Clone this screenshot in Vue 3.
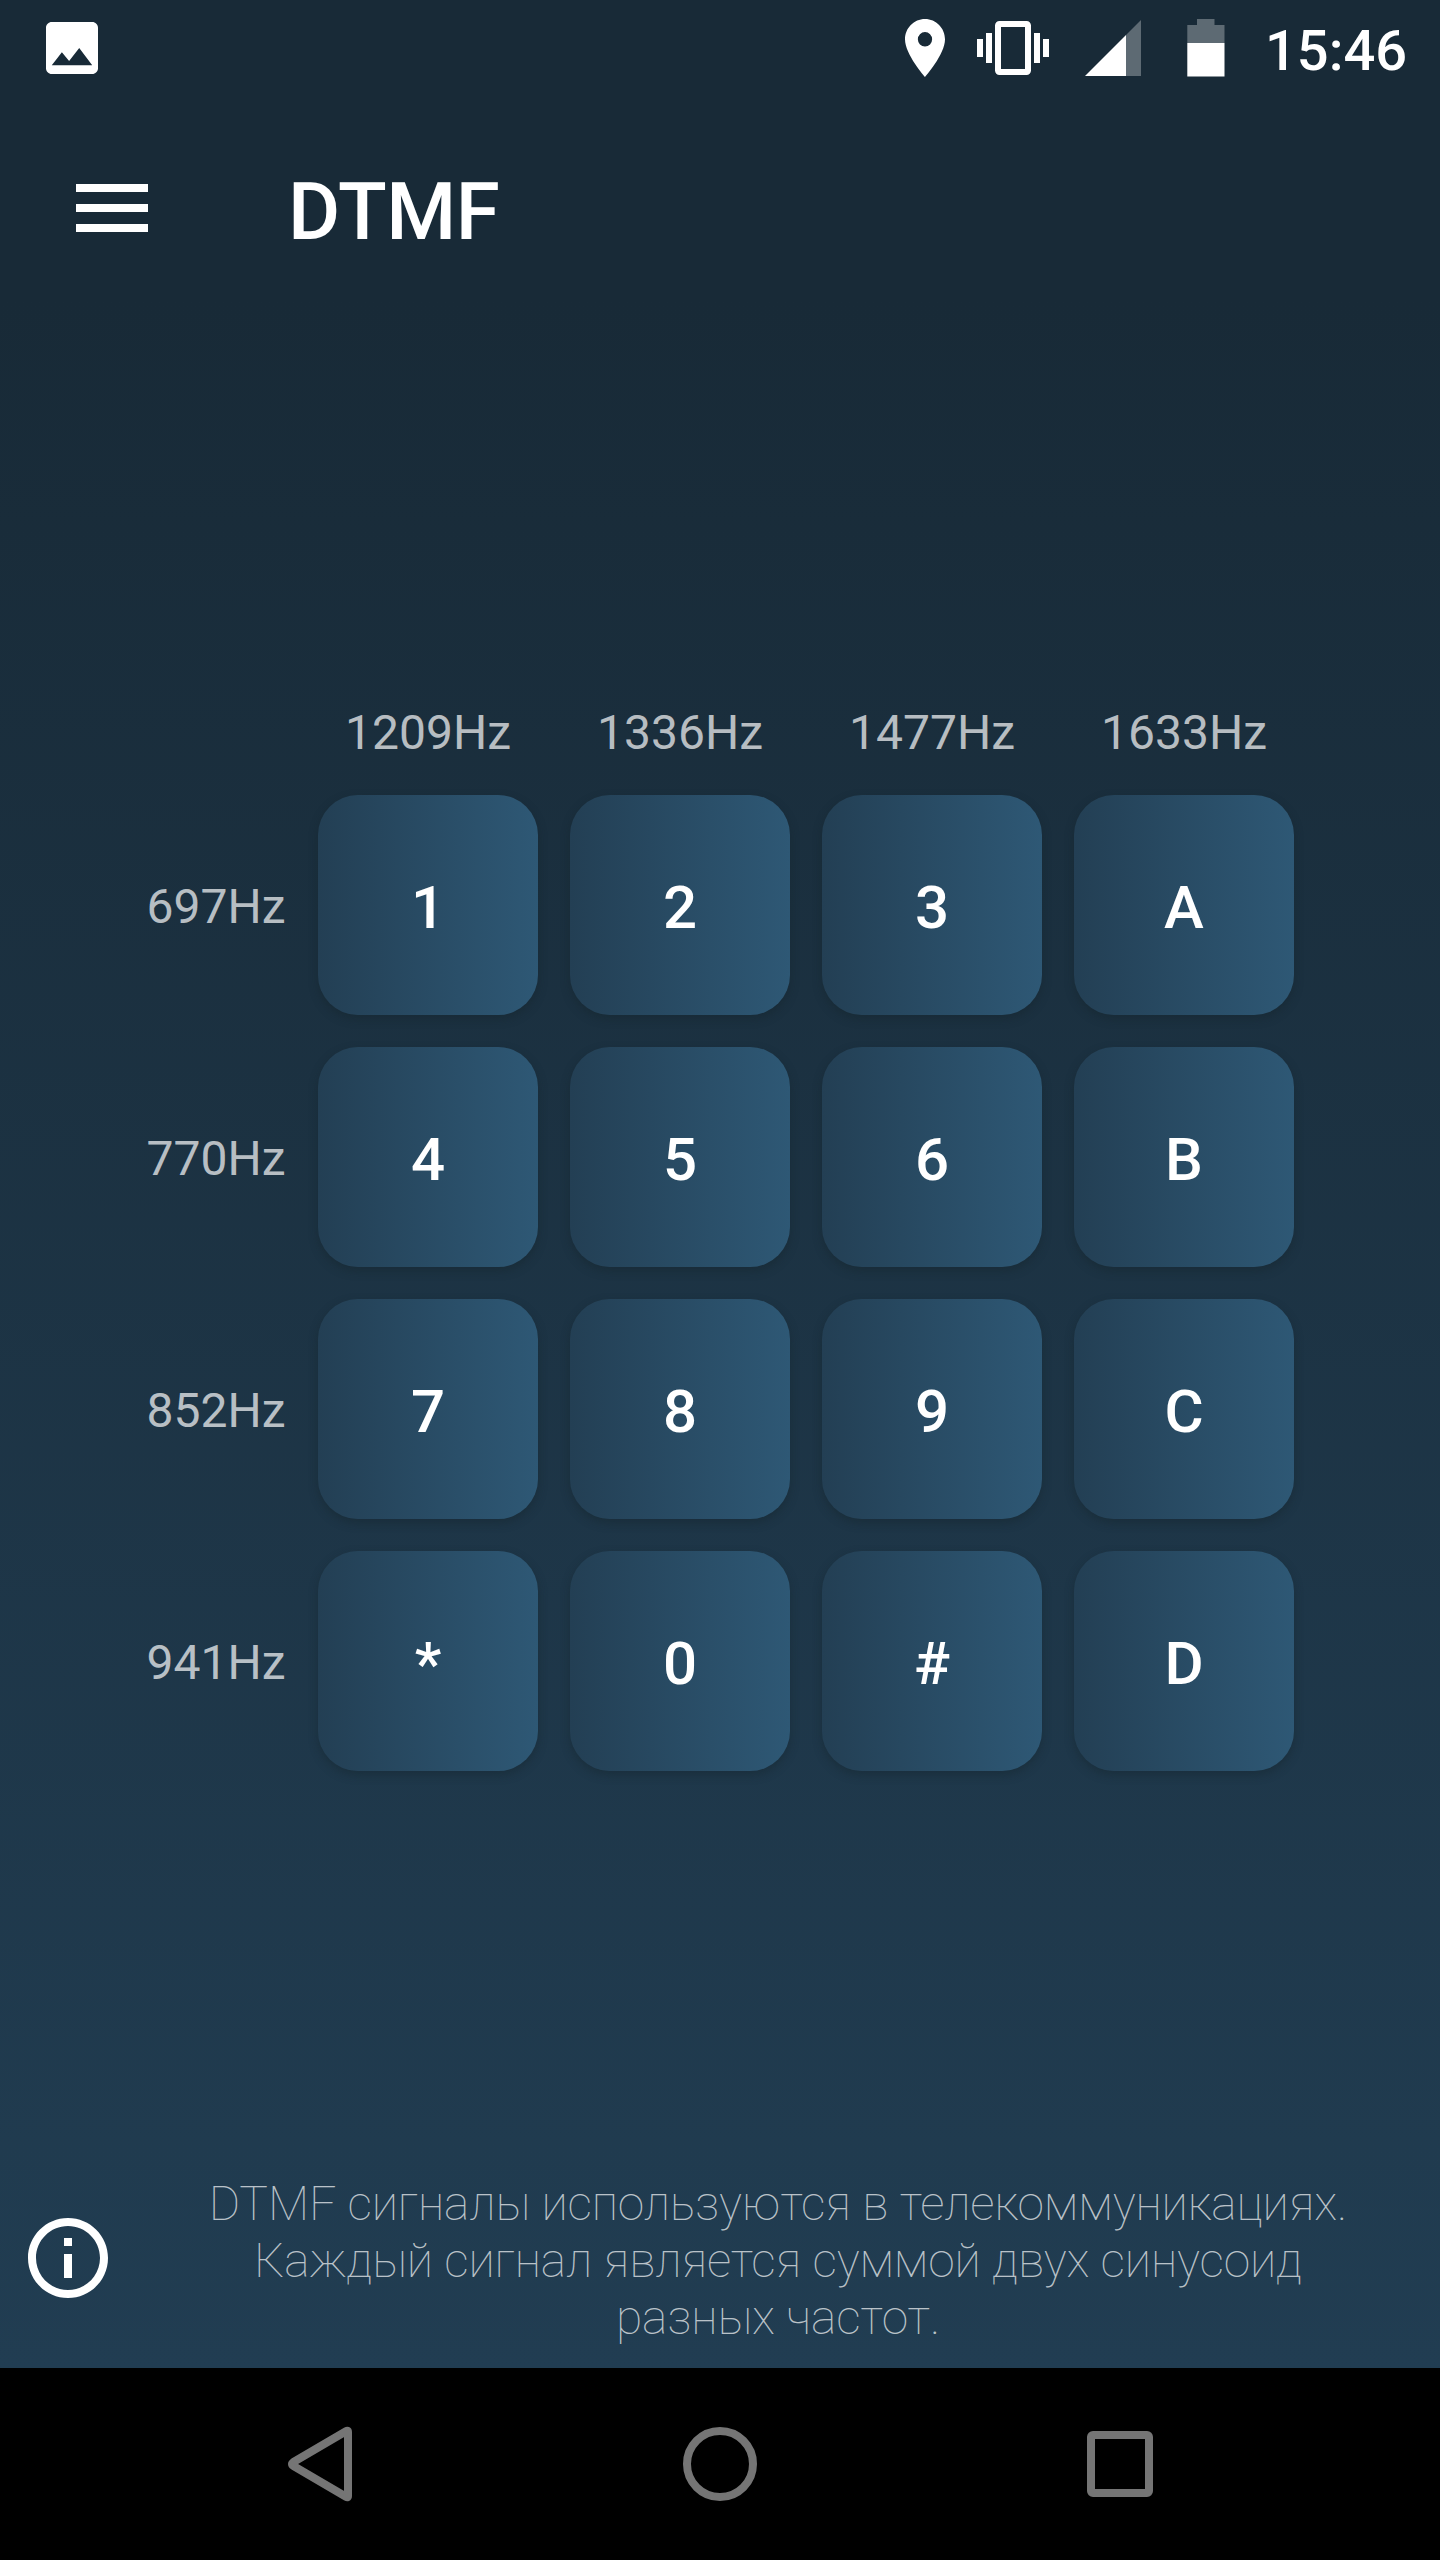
<script setup>
const columns = ['1209Hz', '1336Hz', '1477Hz', '1633Hz']
const rows = [
  { freq: '697Hz', keys: ['1', '2', '3', 'A'] },
  { freq: '770Hz', keys: ['4', '5', '6', 'B'] },
  { freq: '852Hz', keys: ['7', '8', '9', 'C'] },
  { freq: '941Hz', keys: ['*', '0', '#', 'D'] },
]
</script>

<template>
  <div class="screen">
    <header class="status">
      <svg class="picture" width="52" height="52" viewBox="0 0 18 18" fill="#fff">
        <path d="M18 16V2c0-1.100-.9-2-2-2H2C.9 0 0 .9 0 2v14c0 1.100.9 2 2 2h14c1.100 0 2-.9 2-2zM5.500 10.500l2.500 3.010L11.500 9l4.500 6H2z" />
      </svg>
      <svg class="pin" width="40" height="58" viewBox="0 0 14 20" preserveAspectRatio="none" fill="#fff">
        <path d="M7 0C3.130 0 0 3.130 0 7c0 5.250 7 13 7 13s7-7.750 7-13c0-3.870-3.130-7-7-7zm0 9.500a2.500 2.500 0 1 1 0-5 2.500 2.500 0 0 1 0 5z" />
      </svg>
      <svg class="vibrate" width="72" height="54" viewBox="0 0 24 18" fill="#fff">
        <path d="M0 12h2V6H0v6zm3 2h2V4H3v10zm19-8v6h2V6h-2zm-3 8h2V4h-2v10zM16.500 0h-9C6.670 0 6 .67 6 1.500v15c0 .83.67 1.500 1.500 1.500h9c.83 0 1.500-.67 1.500-1.500v-15c0-.83-.67-1.500-1.500-1.500zM16 16H8V2h8v14z" />
      </svg>
      <svg class="signal" width="56" height="56" viewBox="0 0 56 56">
        <path fill="#fff" fill-opacity=".3" d="M41 15 56 0v56H41z" />
        <path fill="#fff" d="M0 56 41 15v41z" />
      </svg>
      <svg class="battery" width="38" height="58" viewBox="0 0 38 58">
        <path fill="#fff" fill-opacity=".3" d="M.3 6H10V0h17.500v6h10v18H.3z" />
        <path fill="#fff" d="M.3 24h37.200v33.500H.3z" />
      </svg>
      <span class="clock">15:46</span>
    </header>

    <div class="appbar">
      <svg width="96" height="96" viewBox="0 0 24 24" fill="#fff">
        <path d="M3 18h18v-2H3v2zm0-5h18v-2H3v2zm0-7v2h18V6H3z" />
      </svg>
      <h1>DTMF</h1>
    </div>

    <main class="pad">
      <span></span>
      <span v-for="c in columns" :key="c" class="col">{{ c }}</span>
      <template v-for="r in rows" :key="r.freq">
        <span class="freq">{{ r.freq }}</span>
        <button v-for="k in r.keys" :key="k" class="key">{{ k }}</button>
      </template>
    </main>

    <section class="info">
      <svg width="96" height="96" viewBox="0 0 24 24" fill="#fff">
        <path d="M11 17h2v-6h-2v6zm1-15C6.480 2 2 6.480 2 12s4.480 10 10 10 10-4.480 10-10S17.520 2 12 2zm0 18c-4.410 0-8-3.590-8-8s3.590-8 8-8 8 3.590 8 8-3.590 8-8 8zM11 9h2V7h-2v2z" />
      </svg>
      <p>DTMF сигналы используются в телекоммуникациях.<br>Каждый сигнал является суммой двух синусоид<br>разных частот.</p>
    </section>

    <nav class="nav">
      <svg width="96" height="96" viewBox="0 0 96 96">
        <path d="M76 16v64q0 2-2 .8L21.500 50q-3-2 0-4L74 15.200q2-1.200 2 .8z" />
      </svg>
      <svg width="96" height="96" viewBox="0 0 96 96"><circle cx="48" cy="48" r="33" /></svg>
      <svg width="96" height="96" viewBox="0 0 96 96"><rect x="19" y="19" width="58" height="58" rx="2" /></svg>
    </nav>
  </div>
</template>

<style>
body {
  margin: 0;
  background: #000;
}
</style>

<style scoped>
.screen {
  width: 1440px;
  height: 2560px;
  display: flex;
  flex-direction: column;
  background: linear-gradient(#182a37 300px, #213d52 2368px);
  color: #fff;
  font-family: Roboto, sans-serif;
  overflow: hidden;
}
svg {
  display: block;
  flex: none;
}
.status {
  height: 96px;
  box-sizing: border-box;
  padding: 19px 32px 0 46px;
  display: flex;
  align-items: flex-start;
}
.picture {
  margin: 3px auto 0 0;
}
.vibrate {
  margin: 2px 36px 0 32px;
}
.signal {
  margin: 1px 46px 0 0;
}
.clock {
  margin-left: 40px;
  width: 143px;
  font-size: 56px;
  font-weight: 500;
  line-height: 64px;
}
.appbar {
  height: 224px;
  box-sizing: border-box;
  padding: 64px 64px 0;
  display: flex;
  align-items: flex-start;
}
.appbar h1 {
  margin: 5px 0 0 128px;
  font-size: 80px;
  font-weight: 500;
  line-height: 94px;
  letter-spacing: -.4px;
}
.pad {
  flex: 1;
  display: grid;
  grid-template-columns: 140px repeat(4, 220px);
  grid-template-rows: 63px repeat(4, 220px);
  column-gap: 32px;
  row-gap: 32px;
  justify-content: center;
  padding-top: 380px;
  font-size: 48px;
}
.col,
.freq {
  padding-top: 1px;
  color: rgba(255, 255, 255, .7);
  line-height: 64px;
  text-align: center;
}
.freq {
  align-self: center;
  padding-top: 3px;
}
.key {
  width: 220px;
  height: 220px;
  border: 0;
  padding: 5px 0 0;
  border-radius: 40px;
  background: linear-gradient(90deg, #233f54, #2e5875);
  box-shadow: 0 4px 10px rgba(20, 35, 40, .4);
  color: #fff;
  font: 500 60px/70px Roboto, sans-serif;
}
.info {
  height: 208px;
  box-sizing: border-box;
  display: flex;
  align-items: flex-start;
  padding: 15px 20px 0;
}
.info svg {
  margin-top: 35px;
}
.info p {
  flex: 1;
  margin: 0;
  padding: 0 0 0 20px;
  font-size: 48px;
  font-weight: 100;
  line-height: 57px;
  letter-spacing: -.16px;
  text-align: center;
  color: rgba(255, 255, 255, .7);
}
.nav {
  height: 192px;
  display: flex;
  align-items: center;
  justify-content: center;
  gap: 304px;
  background: #000;
}
.nav svg {
  fill: none;
  stroke: #757575;
  stroke-width: 8;
  stroke-linejoin: round;
}
</style>
